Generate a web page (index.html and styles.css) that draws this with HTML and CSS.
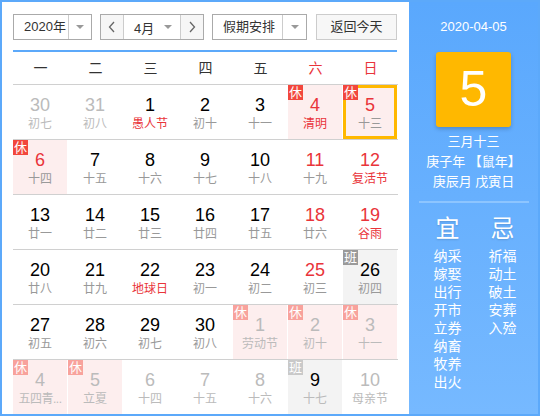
FILE: index.html
```html
<!DOCTYPE html>
<html lang="zh-CN">
<head>
<meta charset="utf-8">
<title>万年历</title>
<link rel="stylesheet" href="styles.css">
</head>
<body>
<div class="cal">
  <div class="main">
    <div class="toolbar">
      <div class="sel year">
        <span class="txt">2020年</span>
        <span class="arrow"><i class="tri"></i></span>
      </div>
      <div class="sel month">
        <span class="nav"><svg width="8" height="12" viewBox="0 0 8 12"><polyline points="6,1 1.5,6 6,11" fill="none" stroke="#666" stroke-width="1.3"/></svg></span>
        <span class="mid"><span>4月</span><i class="tri"></i></span>
        <span class="nav"><svg width="8" height="12" viewBox="0 0 8 12"><polyline points="2,1 6.5,6 2,11" fill="none" stroke="#666" stroke-width="1.3"/></svg></span>
      </div>
      <div class="sel holiday">
        <span class="txt">假期安排</span>
        <span class="arrow"><i class="tri"></i></span>
      </div>
      <div class="btn">返回今天</div>
    </div>
    <div class="week">
      <span>一</span><span>二</span><span>三</span><span>四</span><span>五</span><span class="red">六</span><span class="red">日</span>
    </div>
    <div class="grid">
      <div class="d"><div class="in other"><b class="n">30</b><i class="l">初七</i></div></div>
      <div class="d"><div class="in other"><b class="n">31</b><i class="l">初八</i></div></div>
      <div class="d"><div class="in"><b class="n">1</b><i class="l fest">愚人节</i></div></div>
      <div class="d"><div class="in"><b class="n">2</b><i class="l">初十</i></div></div>
      <div class="d"><div class="in"><b class="n">3</b><i class="l">十一</i></div></div>
      <div class="d"><div class="in rest"><span class="tag">休</span><b class="n wk">4</b><i class="l fest">清明</i></div></div>
      <div class="d"><div class="in rest today"><span class="tag">休</span><b class="n wk">5</b><i class="l">十三</i></div></div>

      <div class="d"><div class="in rest"><span class="tag">休</span><b class="n wk">6</b><i class="l">十四</i></div></div>
      <div class="d"><div class="in"><b class="n">7</b><i class="l">十五</i></div></div>
      <div class="d"><div class="in"><b class="n">8</b><i class="l">十六</i></div></div>
      <div class="d"><div class="in"><b class="n">9</b><i class="l">十七</i></div></div>
      <div class="d"><div class="in"><b class="n">10</b><i class="l">十八</i></div></div>
      <div class="d"><div class="in"><b class="n wk">11</b><i class="l">十九</i></div></div>
      <div class="d"><div class="in"><b class="n wk">12</b><i class="l fest">复活节</i></div></div>

      <div class="d"><div class="in"><b class="n">13</b><i class="l">廿一</i></div></div>
      <div class="d"><div class="in"><b class="n">14</b><i class="l">廿二</i></div></div>
      <div class="d"><div class="in"><b class="n">15</b><i class="l">廿三</i></div></div>
      <div class="d"><div class="in"><b class="n">16</b><i class="l">廿四</i></div></div>
      <div class="d"><div class="in"><b class="n">17</b><i class="l">廿五</i></div></div>
      <div class="d"><div class="in"><b class="n wk">18</b><i class="l">廿六</i></div></div>
      <div class="d"><div class="in"><b class="n wk">19</b><i class="l fest">谷雨</i></div></div>

      <div class="d"><div class="in"><b class="n">20</b><i class="l">廿八</i></div></div>
      <div class="d"><div class="in"><b class="n">21</b><i class="l">廿九</i></div></div>
      <div class="d"><div class="in"><b class="n">22</b><i class="l fest">地球日</i></div></div>
      <div class="d"><div class="in"><b class="n">23</b><i class="l">初一</i></div></div>
      <div class="d"><div class="in"><b class="n">24</b><i class="l">初二</i></div></div>
      <div class="d"><div class="in"><b class="n wk">25</b><i class="l">初三</i></div></div>
      <div class="d"><div class="in work"><span class="tag">班</span><b class="n">26</b><i class="l">初四</i></div></div>

      <div class="d"><div class="in"><b class="n">27</b><i class="l">初五</i></div></div>
      <div class="d"><div class="in"><b class="n">28</b><i class="l">初六</i></div></div>
      <div class="d"><div class="in"><b class="n">29</b><i class="l">初七</i></div></div>
      <div class="d"><div class="in"><b class="n">30</b><i class="l">初八</i></div></div>
      <div class="d"><div class="in other rest"><span class="tag">休</span><b class="n">1</b><i class="l">劳动节</i></div></div>
      <div class="d"><div class="in other rest"><span class="tag">休</span><b class="n">2</b><i class="l">初十</i></div></div>
      <div class="d"><div class="in other rest"><span class="tag">休</span><b class="n">3</b><i class="l">十一</i></div></div>

      <div class="d"><div class="in other rest"><span class="tag">休</span><b class="n">4</b><i class="l tight">五四青...</i></div></div>
      <div class="d"><div class="in other rest"><span class="tag">休</span><b class="n">5</b><i class="l">立夏</i></div></div>
      <div class="d"><div class="in other"><b class="n">6</b><i class="l">十四</i></div></div>
      <div class="d"><div class="in other"><b class="n">7</b><i class="l">十五</i></div></div>
      <div class="d"><div class="in other"><b class="n">8</b><i class="l">十六</i></div></div>
      <div class="d"><div class="in other work"><span class="tag">班</span><b class="n">9</b><i class="l">十七</i></div></div>
      <div class="d"><div class="in other"><b class="n">10</b><i class="l">母亲节</i></div></div>
    </div>
  </div>
  <div class="side">
    <div class="sdate">2020-04-05</div>
    <div class="big">5</div>
    <div class="lunar">三月十三</div>
    <div class="lunar">庚子年 【鼠年】</div>
    <div class="lunar">庚辰月 戊寅日</div>
    <div class="sep"></div>
    <div class="yj">
      <div class="col">
        <div class="head">宜</div>
        <div class="item">纳采</div>
        <div class="item">嫁娶</div>
        <div class="item">出行</div>
        <div class="item">开市</div>
        <div class="item">立券</div>
        <div class="item">纳畜</div>
        <div class="item">牧养</div>
        <div class="item">出火</div>
      </div>
      <div class="col">
        <div class="head">忌</div>
        <div class="item">祈福</div>
        <div class="item">动土</div>
        <div class="item">破土</div>
        <div class="item">安葬</div>
        <div class="item">入殓</div>
      </div>
    </div>
  </div>
</div>
</body>
</html>
```

FILE: styles.css
```css
body {
  margin: 0;
  font-family: "Liberation Sans", "Noto Sans CJK SC", sans-serif;
  background: #fff;
}

.cal {
  width: 540px;
  height: 416px;
  box-sizing: border-box;
  border: 2px solid #5ca9fa;
  display: flex;
  background: #fff;
}

.main {
  width: 407px;
  box-sizing: border-box;
  padding: 12px 0 0 11px;
}

/* toolbar */
.toolbar {
  display: flex;
  height: 26px;
  gap: 8px;
  font-size: 13px;
  color: #333;
}

.sel {
  display: flex;
  box-sizing: border-box;
  height: 26px;
  border: 1px solid #aaa;
  background: #fff;
}

.sel .txt {
  line-height: 24px;
  padding-left: 10px;
  box-sizing: border-box;
}

.arrow {
  display: flex;
  align-items: center;
  justify-content: center;
  border-left: 1px solid #ccc;
}

.tri {
  display: block;
  width: 0;
  height: 0;
  border-left: 4px solid transparent;
  border-right: 4px solid transparent;
  border-top: 4px solid #999;
}

.year { width: 79px; }
.year .txt { width: 55px; }
.year .arrow { width: 22px; }

.month { width: 104px; }
.month .nav {
  width: 22px;
  display: flex;
  align-items: center;
  justify-content: center;
  background: #f6f6f6;
}
.month .mid {
  width: 58px;
  display: flex;
  align-items: center;
  justify-content: space-between;
  padding: 0 8px 0 10px;
  box-sizing: border-box;
  border-left: 1px solid #ccc;
  border-right: 1px solid #ccc;
}

.holiday { width: 95px; }
.holiday .txt { width: 70px; }
.holiday .arrow { width: 23px; }

.btn {
  width: 81px;
  margin-left: 1px;
  box-sizing: border-box;
  height: 26px;
  line-height: 24px;
  text-align: center;
  border: 1px solid #ccc;
  background: #f7f7f7;
}

/* weekdays */
.week {
  width: 384px;
  margin-top: 10px;
  border-top: 2px solid #5ca9fa;
  display: grid;
  grid-template-columns: repeat(7, 55px);
  height: 32px;
  line-height: 32px;
  text-align: center;
  font-size: 14px;
  color: #333;
}
.week .red { color: #e9343a; }

/* grid */
.grid {
  display: grid;
  grid-template-columns: repeat(7, 55px);
  grid-auto-rows: 55px;
}

.d {
  border-top: 1px solid #d0d0d0;
}

.in {
  position: relative;
  height: 54px;
  margin-right: 1px;
  box-sizing: border-box;
  padding-top: 10px;
  text-align: center;
}

.n {
  display: block;
  font-size: 18px;
  line-height: 20px;
  font-weight: normal;
  color: #000;
}

.l {
  display: block;
  font-size: 12px;
  line-height: 18px;
  font-style: normal;
  color: #999;
  padding: 0 2px;
  white-space: nowrap;
}
.l.tight { letter-spacing: -0.5px; }

.n.wk { color: #e9343a; }
.l.fest { color: #e9343a; }

.tag {
  position: absolute;
  left: 0;
  top: 0;
  width: 15px;
  height: 15px;
  font-size: 13px;
  line-height: 15px;
  color: #fff;
  text-align: center;
}

.rest { background: #fdeeee; }
.rest .tag { background: #f2473d; }

.work { background: #f3f3f3; }
.work .tag { background: #9a9a9a; }

.other .n,
.other .l { color: #bbb; }
.other.rest .tag { background: #f8a29c; }
.other.work .tag { background: #c9c9c9; }
.other.work .n { color: #000; }

.today {
  box-shadow: inset 0 0 0 3px #ffb800;
}

/* side panel */
.side {
  flex: 1;
  background: linear-gradient(#5aa8fd, #76b9ff);
  color: #fff;
  text-align: center;
  padding-top: 15px;
  box-sizing: border-box;
}

.sdate {
  font-size: 13px;
  line-height: 20px;
}

.big {
  width: 75px;
  height: 75px;
  margin: 15px auto 0;
  background: #ffb800;
  border-radius: 3px;
  box-shadow: 0 2px 4px rgba(0, 0, 0, 0.2);
  font-size: 50px;
  line-height: 75px;
}

.lunar {
  font-size: 13px;
  line-height: 20px;
  white-space: nowrap;
}
.big + .lunar { margin-top: 5px; }

.sep {
  height: 2px;
  background: #8dc5ff;
  margin: 9px 9px 0 10px;
}

.yj {
  display: flex;
  padding-left: 11px;
  margin-top: 11px;
}

.col { width: 55px; }

.head {
  font-size: 24px;
  line-height: 30px;
  margin-bottom: 3px;
  text-shadow: 0 1px 2px rgba(0, 0, 0, 0.15);
}

.item {
  font-size: 14px;
  line-height: 18px;
}
```
